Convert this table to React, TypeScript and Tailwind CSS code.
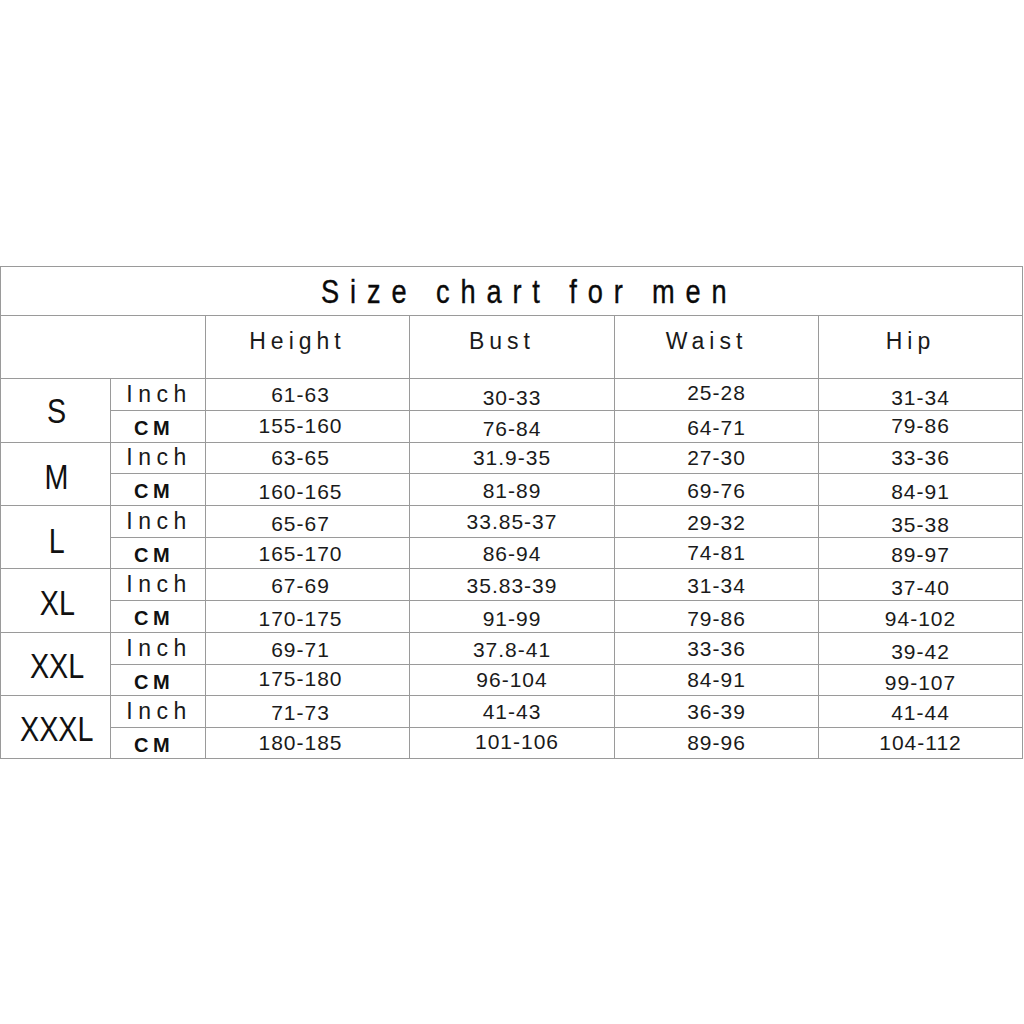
import React from "react";

type Cell = [string, string?];

const sizes: { label: string; lcls?: string; inch: Cell[]; cm: Cell[] }[] = [
  {
    label: "S",
    inch: [["61-63"], ["30-33", "translate-y-[3px]"], ["25-28", "-translate-y-[2px]"], ["31-34", "translate-y-[3px]"]],
    cm: [["155-160", "-translate-y-[1px]"], ["76-84", "translate-y-[2px]"], ["64-71", "translate-y-[1px]"], ["79-86", "-translate-y-[1px]"]],
  },
  {
    label: "M",
    lcls: "translate-y-[3px]",
    inch: [["63-65"], ["31.9-35"], ["27-30"], ["33-36"]],
    cm: [["160-165", "translate-y-[2px]"], ["81-89", "translate-y-[1px]"], ["69-76", "translate-y-[1px]"], ["84-91", "translate-y-[2px]"]],
  },
  {
    label: "L",
    lcls: "translate-y-[4px]",
    inch: [["65-67", "translate-y-[2px]"], ["33.85-37"], ["29-32", "translate-y-[1px]"], ["35-38", "translate-y-[3px]"]],
    cm: [["165-170", "translate-y-[1px]"], ["86-94", "translate-y-[1px]"], ["74-81"], ["89-97", "translate-y-[2px]"]],
  },
  {
    label: "XL",
    lcls: "translate-y-[2px]",
    inch: [["67-69", "translate-y-[1px]"], ["35.83-39", "translate-y-[1px]"], ["31-34", "translate-y-[1px]"], ["37-40", "translate-y-[3px]"]],
    cm: [["170-175", "translate-y-[2px]"], ["91-99", "translate-y-[2px]"], ["79-86", "translate-y-[2px]"], ["94-102", "translate-y-[2px]"]],
  },
  {
    label: "XXL",
    lcls: "translate-y-[2px]",
    inch: [["69-71", "translate-y-[1px]"], ["37.8-41", "translate-y-[1px]"], ["33-36"], ["39-42", "translate-y-[3px]"]],
    cm: [["175-180", "-translate-y-[1px]"], ["96-104"], ["84-91"], ["99-107", "translate-y-[3px]"]],
  },
  {
    label: "XXXL",
    lcls: "translate-y-[2px]",
    inch: [["71-73", "translate-y-[1px]"], ["41-43"], ["36-39"], ["41-44", "translate-y-[1px]"]],
    cm: [["180-185"], ["101-106", "-translate-y-[1px] translate-x-[5px]"], ["89-96"], ["104-112"]],
  },
];

// row heights include the 1px bottom line
const rowH = ["h-[32px]", "h-[32px]", "h-[31px]", "h-[32px]", "h-[32px]", "h-[31px]", "h-[32px]", "h-[32px]", "h-[32px]", "h-[31px]", "h-[32px]", "h-[31px]"];

// the Height column sits a bit left of centre in the original
const colPad = ["pr-[14px]", "", "", ""];

const line = "border-r border-b border-[#9a9a9a]";
const sans = "font-['Liberation_Sans',Arial,sans-serif]";

function DataCell({ cell, h, pad }: { cell: Cell; h: string; pad: string }) {
  return (
    <div className={`${line} ${h} ${pad} flex items-center justify-center`}>
      <span className={`${sans} text-[21px] leading-none tracking-[1px] text-[#1a1a1a] ${cell[1] ?? ""}`}>{cell[0]}</span>
    </div>
  );
}

export default function App() {
  const headers = ["Height", "Bust", "Waist", "Hip"];
  return (
    <div className="min-h-screen bg-white flex items-center">
      <div className="w-[1023px] border-l border-t border-[#9a9a9a] grid grid-cols-[110px_95px_204px_205px_204px_204px]">
        {/* title */}
        <div className={`${line} col-span-6 h-[49px] flex items-center justify-center pl-[36px]`}>
          <span className={`${sans} inline-block scale-x-[0.8] whitespace-nowrap text-[34px] leading-none tracking-[13.6px] text-[#0a0a0a] [-webkit-text-stroke:0.4px_#0a0a0a]`}>
            Size chart for men
          </span>
        </div>

        {/* column headers */}
        <div className={`${line} col-span-2 h-[63px]`} />
        {headers.map((hd) => (
          <div key={hd} className={`${line} h-[63px] flex justify-center pt-[14px] pr-[20px]`}>
            <span className={`${sans} text-[23px] leading-[23px] tracking-[5px] text-[#1a1a1a]`}>{hd}</span>
          </div>
        ))}

        {sizes.map((s, i) => (
          <React.Fragment key={s.label}>
            <div className={`${line} row-span-2 flex items-center justify-center pl-[3px]`}>
              <span className={`${sans} inline-block scale-x-[0.82] text-[35px] leading-none text-[#111] ${s.lcls ?? ""}`}>{s.label}</span>
            </div>
            <div className={`${line} ${rowH[i * 2]} flex items-center justify-center pl-[2px]`}>
              <span className={`${sans} text-[23px] leading-none tracking-[5.5px] text-[#1a1a1a]`}>Inch</span>
            </div>
            {s.inch.map((c, k) => (
              <DataCell key={k} cell={c} h={rowH[i * 2]} pad={colPad[k]} />
            ))}
            <div className={`${line} ${rowH[i * 2 + 1]} flex items-center justify-center pr-[8px]`}>
              <span className={`${sans} font-bold text-[20px] leading-none tracking-[4.5px] text-[#111] translate-y-[2px]`}>CM</span>
            </div>
            {s.cm.map((c, k) => (
              <DataCell key={k} cell={c} h={rowH[i * 2 + 1]} pad={colPad[k]} />
            ))}
          </React.Fragment>
        ))}
      </div>
    </div>
  );
}
